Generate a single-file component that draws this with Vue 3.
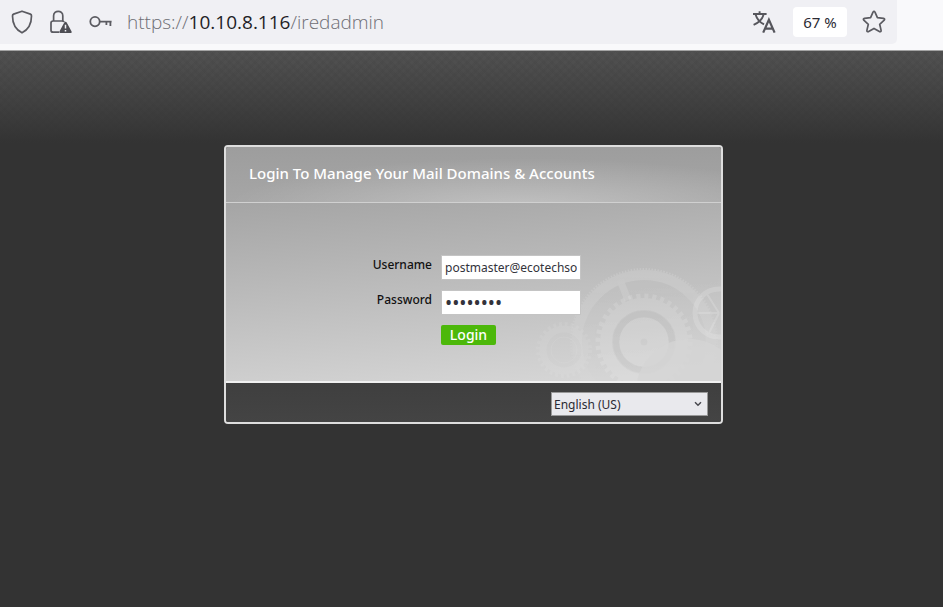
<script setup>
import { ref } from 'vue'

const address = { scheme: 'https://', host: '10.10.8.116', path: '/iredadmin' }
const zoom = ref(67)
const username = ref('postmaster@ecotechsolutions.com')
const password = ref('password')
const language = ref('en_US')
</script>

<template>
  <div class="window">
    <header class="toolbar">
      <div class="urlbar">
        <button class="icon-btn" type="button" aria-label="Tracking protection">
          <svg width="24" height="26" viewBox="0 0 24 26" fill="none" stroke="#5b5b61" stroke-width="1.7" stroke-linejoin="round">
            <path d="M12 2.2 L20.4 5.1 Q21.6 5.6 21.5 7 C21.5 15 18.5 20.5 12 23.8 C5.5 20.5 2.5 15 2.5 7 Q2.4 5.6 3.6 5.1 Z" />
          </svg>
        </button>
        <button class="icon-btn" type="button" aria-label="Connection not secure">
          <svg width="24" height="26" viewBox="0 0 24 26" fill="none">
            <path d="M10 23.2 H4.2 Q2 23.2 2 21.2 V14 Q2 12 4.2 12 H13 Q14.8 12 15.2 13" stroke="#5b5b61" stroke-width="1.7" />
            <path d="M4.6 12 V6.8 C4.6 0.8 13.8 0.8 13.8 6.8 V12" stroke="#5b5b61" stroke-width="1.7" />
            <path d="M16.5 12.8 Q17.3 12.8 17.7 13.6 L22.6 22.4 Q23.2 24 21.6 24 H11.4 Q9.8 24 10.4 22.4 L15.3 13.6 Q15.7 12.8 16.5 12.8 Z" fill="#4d4d53" />
            <path d="M16.5 15.8 V19.6 M16.5 21 V22.4" stroke="#f0f0f4" stroke-width="1.5" />
          </svg>
        </button>
        <button class="icon-btn" type="button" aria-label="Saved logins">
          <svg width="24" height="26" viewBox="0 0 24 26" fill="none" stroke="#5b5b61" stroke-width="1.8">
            <circle cx="7" cy="12.6" r="4.7" />
            <path d="M11.6 12.6 H23.6 M22.4 12.6 V17 M18.4 12.6 V16" />
          </svg>
        </button>
        <div class="address">{{ address.scheme }}<span class="host">{{ address.host }}</span>{{ address.path }}</div>
        <button class="icon-btn translate" type="button" aria-label="Translate page">
          <svg width="24" height="26" viewBox="0 0 24 26" fill="none" stroke="#56565c" stroke-width="1.9">
            <path d="M1 5 H14.6 M7.6 2.2 V5 M3.6 5.4 C5 10.5 8.4 13.5 12 15.4 M11.6 5.4 C10.6 10 6.6 13.6 1.6 15.8" />
            <path d="M11.2 23.6 L16.9 10.8 L22.6 23.6 M13 19.6 H20.8" stroke-width="2.2" />
          </svg>
        </button>
        <button class="zoom" type="button">{{ zoom }} %</button>
        <button class="icon-btn" type="button" aria-label="Bookmark this page">
          <svg width="24" height="26" viewBox="0 0 24 26" fill="none" stroke="#5b5b61" stroke-width="1.7" stroke-linejoin="round">
            <path d="M11 3.1 Q12 1.6 13 3.1 L15.4 8.7 L21.5 9.3 Q23.3 9.8 22.2 11.2 L17.7 15.3 L19.1 21.4 Q19.1 23.2 17.4 22.6 L12 19.4 L6.6 22.6 Q4.9 23.2 4.9 21.4 L6.3 15.3 L1.8 11.2 Q0.7 9.8 2.5 9.3 L8.6 8.7 Z" />
          </svg>
        </button>
      </div>
    </header>

    <main class="page">
      <form class="card" @submit.prevent>
        <h1 class="title">Login To Manage Your Mail Domains &amp; Accounts</h1>

        <div class="body">
          <svg class="gears" width="200" height="119" viewBox="0 0 200 119" fill="none" stroke="#fff" aria-hidden="true">
            <defs>
              <linearGradient id="ring-fade" gradientUnits="userSpaceOnUse" x1="0" y1="5" x2="0" y2="119">
                <stop offset="0" stop-color="#fff" />
                <stop offset="1" stop-color="#fff" stop-opacity="0.1" />
              </linearGradient>
            </defs>
            <g opacity="0.14" stroke="url(#ring-fade)">
              <circle cx="123" cy="80" r="67" stroke-width="10" />
              <circle cx="123" cy="80" r="73" stroke-width="2" stroke-dasharray="1.5 1.5" />
              <path d="M99 18 L107 38" stroke-width="7" />
            </g>
            <g opacity="0.13">
              <circle cx="123" cy="80" r="38" stroke-width="12" />
              <circle cx="123" cy="80" r="46" stroke-width="5" stroke-dasharray="4 4.03" />
              <circle cx="123" cy="80" r="14" stroke-width="21" />
            </g>
            <circle cx="123" cy="80" r="28" stroke="#888" stroke-width="6" opacity="0.06" />
            <g opacity="0.07">
              <circle cx="43" cy="88" r="21" stroke-width="7" />
              <circle cx="43" cy="88" r="26" stroke-width="4" stroke-dasharray="3 2.83" />
              <circle cx="43" cy="88" r="13" stroke-width="1" />
            </g>
            <g opacity="0.16">
              <circle cx="198" cy="51" r="24" stroke-width="5" />
              <path d="M198 51 L176 51 M198 51 L186 32 M198 51 L188 71" stroke-width="2" />
            </g>
            <circle cx="168" cy="130" r="53" fill="#d5d5d5" stroke="none" opacity="0.8" />
          </svg>

          <div class="fields">
            <label for="username">Username</label>
            <input id="username" v-model="username" type="text" autocomplete="off" />
            <label for="password">Password</label>
            <input id="password" v-model="password" type="password" autocomplete="off" />
            <button class="login" type="submit">Login</button>
          </div>
        </div>

        <footer class="foot">
          <div class="select-wrap">
            <select v-model="language" aria-label="Language">
              <option value="en_US">English (US)</option>
            </select>
            <svg class="chevron" width="8" height="6" viewBox="0 0 8 6" fill="none" stroke="#4a4a50" stroke-width="1.5" aria-hidden="true">
              <path d="M1 1.2 L4 4.2 L7 1.2" />
            </svg>
          </div>
        </footer>
      </form>
    </main>
  </div>
</template>

<style>
body {
  margin: 0;
  background: #333;
}
</style>

<style scoped>
.window {
  display: flex;
  flex-direction: column;
  min-height: 100vh;
  font-family: "Noto Sans", "Open Sans", sans-serif;
}

button {
  border: 0;
  margin: 0;
  font-family: inherit;
}

.toolbar {
  padding: 0 46px 6px 0;
  background: #f9f9fb;
  border-bottom: 1px solid #a4a4a4;
}

.urlbar {
  display: flex;
  align-items: center;
  gap: 15px;
  height: 44px;
  padding: 0 11px 0 10px;
  background: #f0f0f4;
  border-radius: 0 0 5px 0;
}

.icon-btn {
  display: flex;
  padding: 0;
  background: none;
}

.icon-btn svg {
  display: block;
}

.translate {
  padding-right: 2px;
}

.address {
  flex: 1;
  color: #6e6e75;
  font-family: "Open Sans", sans-serif;
  font-size: 19px;
  font-weight: 300;
  line-height: 26px;
  white-space: nowrap;
}

.host {
  color: #1f1e26;
  font-weight: 400;
}

.zoom {
  width: 54px;
  height: 30px;
  padding: 0;
  border-radius: 4px;
  background: #fff;
  color: #2b2a33;
  font-size: 15px;
}

.page {
  flex: 1;
  padding: 94px 0 24px 4px;
  background:
    linear-gradient(rgba(51, 51, 51, 0), #333 92px),
    repeating-linear-gradient(45deg, rgba(0, 0, 0, 0.03) 0 3px, transparent 3px 6px),
    repeating-linear-gradient(-45deg, rgba(0, 0, 0, 0.03) 0 3px, transparent 3px 6px),
    #525252;
}

.card {
  box-sizing: border-box;
  max-width: 499px;
  margin: 0 auto;
  border: 2px solid #dedede;
  border-radius: 4px;
  overflow: hidden;
  background: #424242;
}

.title {
  margin: 0;
  padding: 14px 23px 17px;
  border-bottom: 1px solid #d0d0d0;
  background:
    radial-gradient(ellipse 60% 90% at 60% 110%, rgba(255, 255, 255, 0.3), rgba(255, 255, 255, 0)),
    linear-gradient(#9d9d9d, #a6a6a6);
  color: #fff;
  font-size: 15px;
  font-weight: 500;
  line-height: 24px;
}

.body {
  position: relative;
  padding: 52px 0 36px;
  border-bottom: 2px solid #f0f0f0;
  background: linear-gradient(175deg, #a5a5a5, #d8d8d8);
}

.gears {
  position: absolute;
  right: 0;
  bottom: 0;
}

.fields {
  position: relative;
  display: grid;
  grid-template-columns: 206px 140px;
  column-gap: 9px;
  row-gap: 10px;
}

label {
  color: #111;
  font-size: 12px;
  font-weight: 500;
  line-height: 20px;
  text-align: right;
}

input {
  box-sizing: border-box;
  width: 100%;
  height: 25px;
  padding: 0 3px;
  border: 1px solid #c4c4c4;
  border-radius: 0;
  outline: 0;
  background: #fff;
  color: #33333b;
  font-family: inherit;
  font-size: 12px;
}

input[type="password"] {
  font-size: 19px;
}

.login {
  grid-column: 2;
  justify-self: start;
  width: 55px;
  height: 20px;
  padding: 0;
  border-radius: 2px;
  background: #4cb80a;
  color: #fff;
  font-size: 14px;
  font-weight: 500;
  line-height: 20px;
}

.foot {
  display: flex;
  justify-content: flex-end;
  padding: 9px 13px 6px;
  background: linear-gradient(#3f3f3f, #444);
}

.select-wrap {
  position: relative;
}

select {
  appearance: none;
  display: block;
  box-sizing: border-box;
  width: 157px;
  height: 24px;
  padding: 0 20px 0 2px;
  border: 1px solid #999;
  border-radius: 0;
  background: #e9e9ed;
  color: #2b2a33;
  font-family: inherit;
  font-size: 12px;
}

.chevron {
  position: absolute;
  top: 9px;
  right: 6px;
  pointer-events: none;
}
</style>
